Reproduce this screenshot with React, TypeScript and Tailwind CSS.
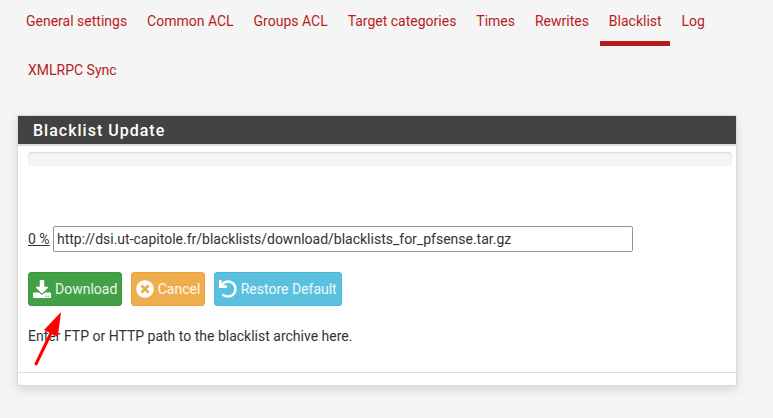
import React from "react";
import { FaDownload, FaTimesCircle, FaUndo } from "react-icons/fa";

const tabs = [
  "General settings",
  "Common ACL",
  "Groups ACL",
  "Target categories",
  "Times",
  "Rewrites",
  "Blacklist",
  "Log",
];

function Tab({ label, active = false }: { label: string; active?: boolean }) {
  return (
    <a
      className={`block h-[46px] whitespace-nowrap border-b-[5px] pl-[9px] pr-[8.5px] pt-[11px] leading-5 ${
        active ? "border-[#b71c1c]" : "border-transparent"
      }`}
    >
      {label}
    </a>
  );
}

export default function App() {
  return (
    <div className="relative h-[418px] w-[773px] overflow-hidden bg-[#f5f5f5] font-[Roboto,sans-serif] text-sm text-[#333]">
      <nav className="h-[115px] text-[#b71c1c]">
        <div className="flex gap-[2.45px] pl-[17px]">
          {tabs.map((t) => (
            <Tab key={t} label={t} active={t === "Blacklist"} />
          ))}
        </div>
        <div className="mt-[3px] flex pl-[19px]">
          <Tab label="XMLRPC Sync" />
        </div>
      </nav>

      <section className="ml-[17px] h-[271px] w-[720px] border border-[#d9dada] bg-white shadow-[0_4px_10px_rgba(0,0,0,0.12)]">
        <h2 className="h-[30px] border-b-2 border-[#dcdcdc] bg-[#424242] pl-[15px] text-base font-medium leading-[29px] tracking-[1px] text-white">
          Blacklist Update
        </h2>
        <div className="ml-[10px] mt-[6px] h-[14px] w-[704px] rounded bg-[#f5f5f5] shadow-[inset_0_1px_2px_rgba(0,0,0,0.12)]" />
        <div className="ml-[10px] mt-[60px] flex h-[26px] items-center">
          <span className="w-[25px] leading-[26px]">
            <u className="underline">0 %</u>
          </span>
          <input
            readOnly
            className="h-[26px] w-[580px] rounded-[2px] border border-[#8f8f9d] bg-white px-[3px] text-sm outline-none"
            value="http://dsi.ut-capitole.fr/blacklists/download/blacklists_for_pfsense.tar.gz"
          />
        </div>
        <div className="ml-[10px] mt-5 flex gap-[9px] text-white">
          <button className="flex h-[34px] w-[94px] items-center rounded-[3px] border border-[#3d9641] bg-[#43a047] pl-1">
            <FaDownload className="mr-1 size-[18px] shrink-0" />
            <span className="text-white/90">Download</span>
          </button>
          <button className="flex h-[34px] w-[74px] items-center rounded-[3px] border border-[#eea236] bg-[#f0ad4e] pl-1">
            <FaTimesCircle className="mr-[3.7px] size-[18px] shrink-0" />
            <span className="text-white/90">Cancel</span>
          </button>
          <button className="flex h-[34px] w-[128px] items-center whitespace-nowrap rounded-[3px] border border-[#46b8da] bg-[#5bc0de] pl-1">
            <FaUndo className="mr-[3.7px] size-[18px] shrink-0" />
            <span className="text-white/90">Restore Default</span>
          </button>
        </div>
        <p className="ml-[10px] mt-5 h-[46px] leading-5">
          Enter FTP or HTTP path to the blacklist archive here.
        </p>
        <div className="border-t border-[#dcdcdc]" />
      </section>

      <svg className="absolute left-[30px] top-[308px]" width="40" height="62" viewBox="30 308 40 62">
        <path d="M35.5 365 L51 333" stroke="#f00" strokeWidth="3" />
        <path d="M61 312 L44 330 L57.8 336.8 Z" fill="#f00" />
      </svg>
    </div>
  );
}
